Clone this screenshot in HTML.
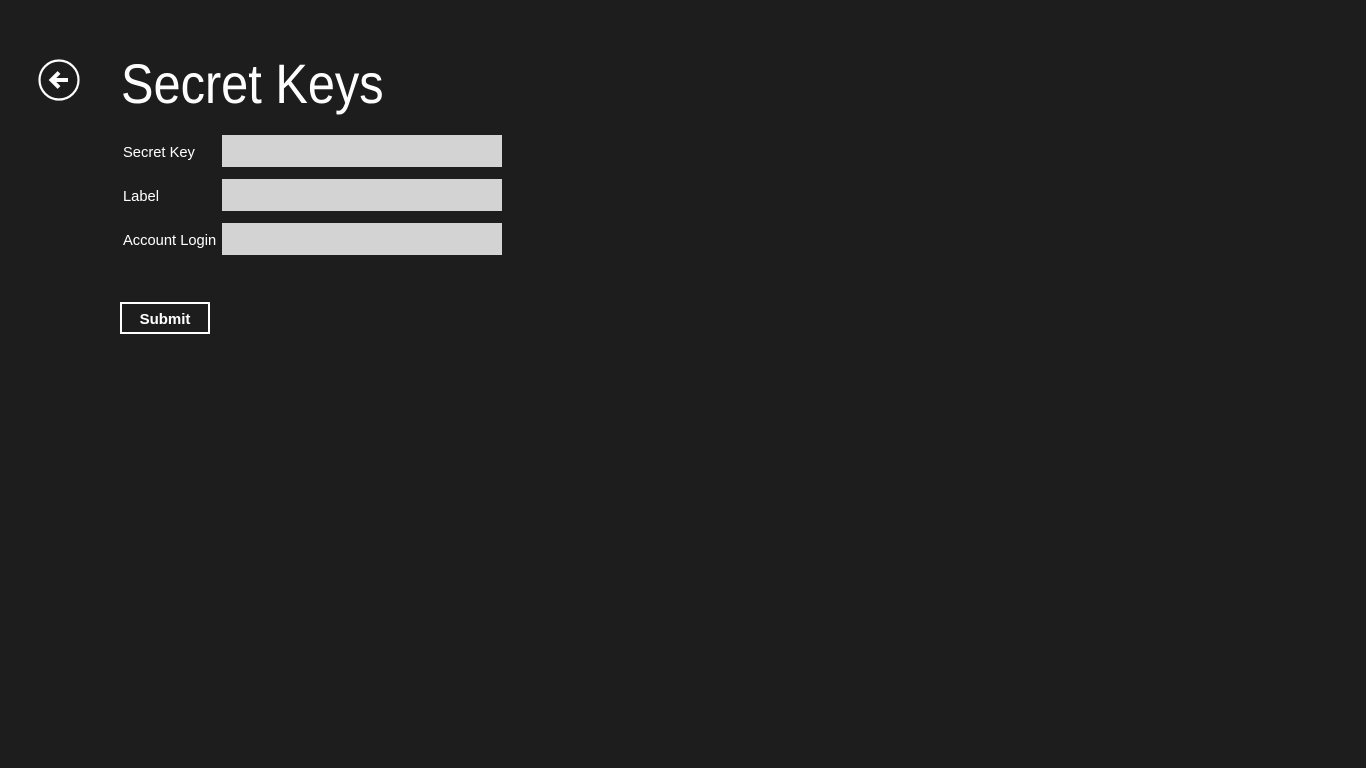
<!DOCTYPE html>
<html><head><style>
html,body{margin:0;padding:0;background:#1d1d1d;width:1366px;height:768px;overflow:hidden;font-family:"Liberation Sans",sans-serif;color:#fff}
.t{position:absolute;left:121px;top:52px;font-size:56px;line-height:64px;transform-origin:0 0;transform:scaleX(0.87);font-weight:normal;white-space:nowrap}
.l{position:absolute;left:123px;font-size:15px;transform-origin:0 0;transform:scaleX(0.98);white-space:nowrap}
.i{position:absolute;left:222px;width:280px;height:32px;background:#d3d3d3}
.b{position:absolute;left:120px;top:302px;width:86px;height:28px;border:2px solid #fff;text-align:center;line-height:31px;font-weight:bold;font-size:15px}
</style></head><body>
<svg style="position:absolute;left:37px;top:58px" width="44" height="44" viewBox="0 0 44 44">
<circle cx="22" cy="22" r="19.5" fill="none" stroke="#fff" stroke-width="2.2"/>
<path d="M31 22H15M22 14.5L14.5 22L22 29.5" fill="none" stroke="#fff" stroke-width="4" stroke-linejoin="miter"/>
</svg>
<div class="t">Secret Keys</div>
<div class="l" style="top:144px">Secret Key</div>
<div class="l" style="top:188px">Label</div>
<div class="l" style="top:232px">Account Login</div>
<div class="i" style="top:135px"></div>
<div class="i" style="top:179px"></div>
<div class="i" style="top:223px"></div>
<div class="b">Submit</div>
</body></html>
